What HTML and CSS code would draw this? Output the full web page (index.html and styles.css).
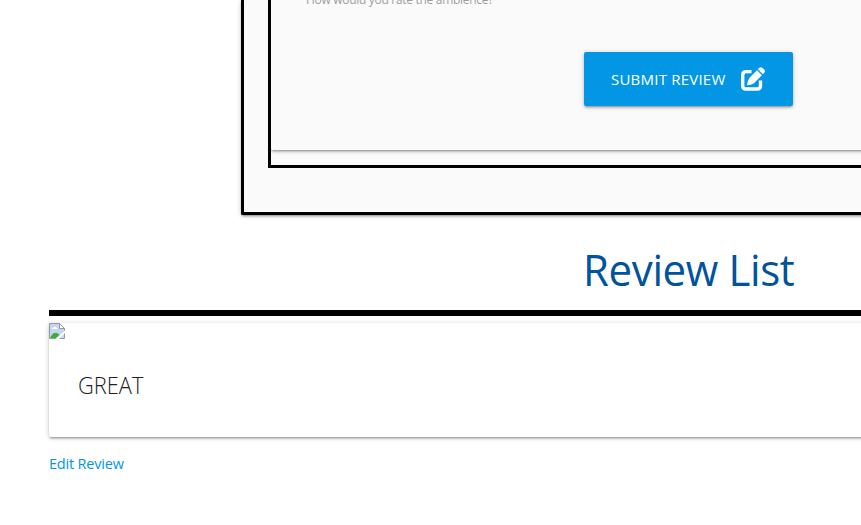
FILE: index.html
```html
<!DOCTYPE html>
<html lang="en">
<head>
<meta charset="utf-8">
<title>Reviews</title>
<link rel="stylesheet" href="styles.css">
</head>
<body>
<main class="page">
  <section class="outer">
    <div class="inner">
      <form class="form-card">
        <label class="hint"><span>How would you rate the ambience?</span></label>
        <button class="submit" type="button">
          <span class="submit-text">SUBMIT REVIEW</span>
          <svg class="edit" viewBox="0 0 26 26" width="26" height="26">
            <path d="M11.500 5.600H6Q2.700 5.600 2.700 8.900v10.800q0 3.300 3.300 3.300h11.200q3.300 0 3.300-3.300V14.500" fill="none" stroke="#fff" stroke-width="3.400"/>
            <path d="M17 4.200 21.900 9.200 14 17.200Q11.500 19 7 19.300 7.300 15 9.300 12Z" fill="#fff"/>
            <path d="M17.900 3.300 19 2Q20.800.4 22.600 2L24.100 3.500Q25.700 5.300 24.100 7.100L22.800 8.200Z" fill="#fff"/>
          </svg>
        </button>
      </form>
    </div>
  </section>
  <h2 class="title"><span>Review List</span></h2>
  <section class="list">
    <article class="review">
      <svg class="broken" viewBox="0 0 16 16" width="16" height="16">
        <path d="M.5.5h10l5 5v10H.5z" fill="#c4d6f5" stroke="#9a9a9a"/>
        <path d="M3 6q0-2 2-1.600Q6 2.500 7.300 4.400 9 4.500 8.500 6Z" fill="#fff"/>
        <path d="M1 15q3-6 6.500-5 2 .5 3 2L7 15Z" fill="#3daf36"/>
        <path d="M10.500.5v5h5z" fill="#fff" stroke="#9a9a9a"/>
        <path d="M6.500 16 16 7.500V10l-6 6Z" fill="#fff"/>
      </svg>
      <h3 class="review-title"><span>GREAT</span></h3>
    </article>
    <a class="edit-link"><span>Edit Review</span></a>
  </section>
</main>
</body>
</html>
```
FILE: styles.css
```css
* { box-sizing: border-box; }
html, body { margin: 0; height: 100%; overflow: hidden; background: #fff; }
body { font-family: "Segoe UI", "Open Sans", "Noto Sans", sans-serif; }
.page { width: 1378px; padding: 0 49px; }
.outer, .form-card, .review, .submit {
  box-shadow: 0 2px 2px 0 rgba(0,0,0,.14), 0 3px 1px -2px rgba(0,0,0,.12), 0 1px 5px 0 rgba(0,0,0,.2);
}
.outer {
  width: 896px; height: 215px; margin: 0 auto; padding: 0 24px;
  border: 3px solid #000; border-top: 0; border-radius: 0 0 2px 2px; background: #fafafa;
}
.inner { height: 168px; border: 3px solid #000; border-top: 0; }
.form-card {
  display: flex; flex-direction: column; align-items: center;
  height: 150px; border-radius: 0 0 2px 2px; background: #fafafa;
}
.hint {
  align-self: flex-start; height: 52px; margin-left: 35px;
  font-size: 12px; line-height: 16px; color: #9e9e9e; white-space: nowrap;
}
.hint span { display: block; margin-top: -8px; letter-spacing: -.3px; }
.submit {
  display: flex; align-items: center; width: 209px; height: 54px; margin-right: 1px; padding: 0 26px 0 27px;
  border: 0; border-radius: 2px; background: #0396e5; color: #fff;
  font: 15px/20px "Segoe UI", "Open Sans", sans-serif;
}
.submit-text { width: 129px; text-align: left; white-space: nowrap; letter-spacing: .22px; }
.edit { flex: none; }
.title {
  height: 95px; margin: 0; padding-top: 24px; text-align: center;
  font-size: 44px; line-height: 60px; font-weight: 370; color: #01539d;
}
.title span { display: inline-block; letter-spacing: -.4px; transform: scaleX(.954); }
.list { border-top: 6px solid #000; padding-top: 7px; }
.review { height: 114px; border-radius: 2px; background: #fff; }
.broken { display: block; }
.review-title {
  margin: 0; padding: 30px 0 0 29px;
  font-size: 23px; line-height: 32px; font-weight: 300; color: #212121;
}
.review-title span { display: inline-block; transform: scaleX(.95); transform-origin: left; }
.edit-link {
  display: block; margin-top: 17px; font-size: 14.5px; line-height: 20px; color: #0396e5;
}
.edit-link span { display: inline-block; letter-spacing: -.2px; }
```
